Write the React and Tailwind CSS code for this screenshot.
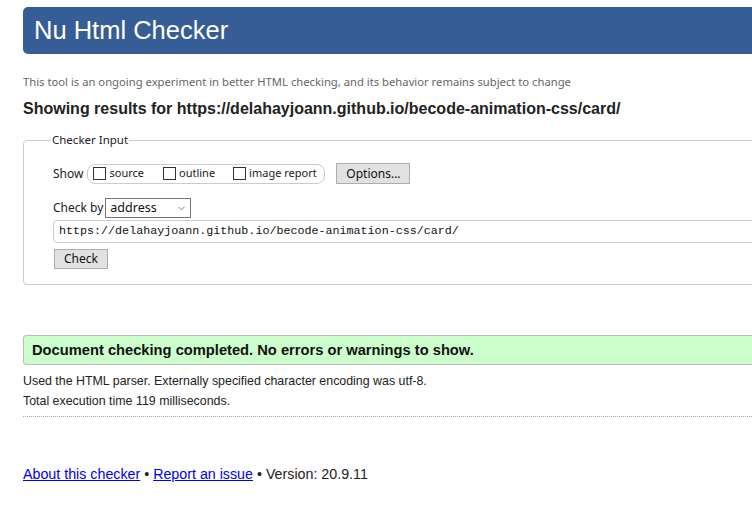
import { ChevronDown } from 'lucide-react'

const ui = { fontFamily: '"Noto Sans", "Open Sans", sans-serif' }
const arial = { fontFamily: '"Liberation Sans", Arial, sans-serif' }
const mono = { fontFamily: '"Liberation Mono", "DejaVu Sans Mono", monospace' }

function Box({ label }) {
  return (
    <label className="flex items-center gap-[3px]">
      <span className="w-[13px] h-[13px] border border-[#333] bg-white" />
      <span className="text-[11px] text-[#222]">{label}</span>
    </label>
  )
}

export default function App() {
  return (
    <div className="w-[752px] h-[506px] overflow-hidden bg-white text-[#222]" style={arial}>
      <div className="pl-[23px] w-[900px]">
        {/* title bar */}
        <div className="mt-[7px] h-[47px] rounded-[5px] bg-[#365d95] pl-[11px] flex items-center">
          <h1 className="text-[25.5px] text-white leading-none">Nu Html Checker</h1>
        </div>

        <p className="mt-[20px] text-[11.25px] leading-[16px] text-[#666]" style={ui}>
          This tool is an ongoing experiment in better HTML checking, and its behavior remains subject to change
        </p>
        <p className="mt-[9px] text-[16px] leading-[20px] font-bold text-[#222]">
          Showing results for https://delahayjoann.github.io/becode-animation-css/card/
        </p>

        {/* checker input */}
        <fieldset className="mt-[14px] border border-[#ccc] rounded-[4px] pl-[29px] pb-[15px]" style={ui}>
          <legend className="-ml-[2px] px-[1px] text-[11.5px] leading-[14px] text-[#222]">Checker Input</legend>

          <div className="mt-[16px] flex items-center h-[21px]">
            <span className="text-[12px] text-[#222] mr-[4px]">Show</span>
            <div className="h-[20px] w-[238px] border border-[#ccc] rounded-[8px] flex items-center pl-[5px] gap-[13px]">
              <Box label="source" />
              <span className="ml-[6px]"><Box label="outline" /></span>
              <span className="ml-[5px]"><Box label="image report" /></span>
            </div>
            <button className="ml-[11px] h-[21px] w-[74px] bg-[#e1e1e1] border border-[#adadad] text-[12px] text-[#111]">
              Options...
            </button>
          </div>

          <div className="mt-[14px] flex items-center h-[20px]">
            <span className="text-[12px] text-[#222] mr-[2px]">Check by</span>
            <div className="h-[20px] w-[86px] border border-[#767676] bg-white flex items-center justify-between pl-[4px] pr-[3px]">
              <span className="text-[12.5px] text-[#111]">address</span>
              <ChevronDown className="w-[11px] h-[11px] text-[#444]" strokeWidth={1.5} />
            </div>
          </div>

          <div className="mt-[2px] h-[23px] border border-[#ccc] rounded-[4px] bg-white flex items-center pl-[5px]">
            <span className="text-[11.7px] text-[#111]" style={mono}>https://delahayjoann.github.io/becode-animation-css/card/</span>
          </div>

          <button className="mt-[6px] ml-[1px] h-[20px] w-[54px] bg-[#e1e1e1] border border-[#adadad] text-[12px] text-[#111] flex items-center justify-center">
            Check
          </button>
        </fieldset>

        {/* result */}
        <div className="mt-[50px] h-[30px] border border-[#bbb] rounded-[3px] bg-[#ccffcc] flex items-center pl-[8px]">
          <p className="text-[14.7px] font-bold text-[#111]">Document checking completed. No errors or warnings to show.</p>
        </div>
        <p className="mt-[8px] text-[12.4px] leading-[16px]">Used the HTML parser. Externally specified character encoding was utf-8.</p>
        <p className="mt-[4px] text-[12.4px] leading-[16px]">Total execution time 119 milliseconds.</p>
        <div className="mt-[7px] border-t border-dotted border-[#aaa]" />

        <p className="mt-[48px] text-[14.25px] leading-[18px] text-[#222]">
          <a href="#" className="text-[#0000ee] underline">About this checker</a>
          {' • '}
          <a href="#" className="text-[#0000ee] underline">Report an issue</a>
          {' • Version: 20.9.11'}
        </p>
      </div>
    </div>
  )
}
